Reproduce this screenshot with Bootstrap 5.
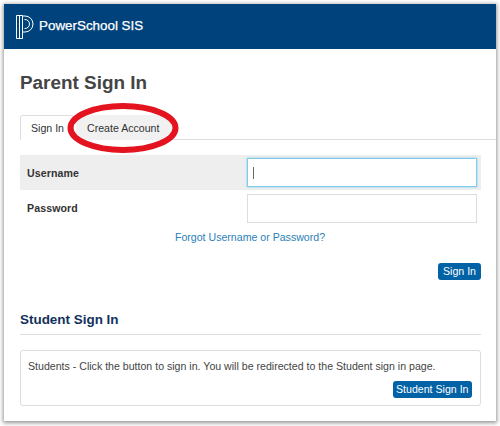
<!DOCTYPE html>
<html lang="en">
<head>
<meta charset="utf-8">
<title>Parent Sign In</title>
<link href="https://cdn.jsdelivr.net/npm/bootstrap@5.3.0/dist/css/bootstrap.min.css" rel="stylesheet">
<style>
html,body{height:426px;overflow:hidden}
body{background:#fff;font-family:"Liberation Sans",Arial,sans-serif;font-size:10.6px;color:#333;padding:4px 4px 5px 4px}
.ps-window{position:relative;height:417px;background:#fff;box-shadow:0 1px 4px 1px rgba(0,0,0,.42)}
.ps-head{height:45px;background:#00427c;padding:0 0 0 12px;gap:5px}
.ps-brand{color:#fff;font-size:13.4px;font-weight:400;-webkit-text-stroke:.25px #fff}
.ps-body{padding:0 15px 0 16px}
.ps-title{font-size:18.9px;font-weight:700;color:#444;margin:22px 0 0;line-height:24px}
.ps-tabs{margin:20px -15px 0 0;height:25px;border-bottom:1px solid #ddd;padding-left:0;gap:2px;flex-wrap:nowrap}
.ps-tabs .nav-link{font-size:10.6px;line-height:14px;color:#333;padding:5px 9px 5px 10px;border:1px solid transparent;border-radius:3px 3px 0 0;height:25px;margin:0}
.ps-tabs .nav-link.active{background:#fff;border-color:#ddd #ddd #fff;color:#333}
.ps-tabs .ps-off{background:#f1f1f1;padding-left:10px;padding-right:12px}
.ps-row{display:flex;align-items:center;height:35px;padding-left:7px}
.ps-row-on{background:#eee;margin-top:15px}
.ps-row-pw{height:33px;margin-top:1px;padding-top:1px}
.ps-row label{width:220px;font-weight:700;font-size:10.6px;letter-spacing:.1px;color:#333;margin:0;padding-top:2px}
.ps-in{width:230px;height:29px;border:1px solid #ddd;border-radius:0;padding:0 5px;font-size:12px;color:#555;background:#fff}
.ps-in-on{border:1px solid #7fcbea;box-shadow:0 0 2px #7fcbea;outline:0}
.ps-caret{width:1px;height:12px;background:#666}
.ps-forgot{display:block;text-align:center;margin-top:6px;line-height:14px;color:#2a7fb8;text-decoration:none;font-size:10.6px;padding-right:1px}
.ps-btn{background:#0162a6;color:#fff;font-size:10.6px;line-height:15px;padding:1px 3.5px;border:0;border-radius:3px}
.ps-btn:hover{background:#0162a6;color:#fff}
.ps-btn-sign{padding:1px 5px}
.ps-actions{margin-top:19px;height:17px}
.ps-sub{font-size:13.45px;font-weight:700;color:#12305c;margin:32px 0 0;line-height:16px}
.ps-rule{margin:6px 0 15px;border:0;border-top:1px solid #ddd;opacity:1}
.ps-box{height:56px;border:1px solid #ddd;border-radius:3px;padding:8px 8px 0 7px;color:#444;font-size:10.6px;line-height:14px}
.ps-box .ps-actions{margin-top:8px;height:17px}
.ps-ring{position:absolute;left:60px;top:95px;width:118px;height:58px;pointer-events:none}
</style>
</head>
<body>
<div class="ps-window">
  <header class="ps-head d-flex align-items-center">
    <svg width="18" height="24" viewBox="0 0 18 24" fill="none" stroke="#fff" stroke-width="1" aria-hidden="true">
      <path d="M.5.5h6v23h-6z"/>
      <path d="M3.5.5v23"/>
      <path d="M6.5 1h2.5a8 8 0 0 1 0 16H6.5"/>
      <path d="M8.5 4.5h.5a4.5 4.5 0 0 1 0 9h-.5"/>
    </svg>
    <span class="ps-brand">PowerSchool SIS</span>
  </header>
  <main class="ps-body">
    <h1 class="ps-title">Parent Sign In</h1>
    <ul class="nav nav-tabs ps-tabs">
      <li class="nav-item"><a class="nav-link active" href="#">Sign In</a></li>
      <li class="nav-item"><a class="nav-link ps-off" href="#">Create Account</a></li>
    </ul>
    <div class="ps-row ps-row-on">
      <label for="u">Username</label>
      <div class="ps-in ps-in-on d-flex align-items-center" id="u"><span class="ps-caret"></span></div>
    </div>
    <div class="ps-row ps-row-pw">
      <label for="p">Password</label>
      <input class="ps-in" id="p" type="password">
    </div>
    <a class="ps-forgot" href="#">Forgot Username or Password?</a>
    <div class="ps-actions d-flex justify-content-end"><button class="btn ps-btn ps-btn-sign" type="button">Sign In</button></div>
    <h2 class="ps-sub">Student Sign In</h2>
    <hr class="ps-rule">
    <div class="ps-box">
      <div>Students - Click the button to sign in. You will be redirected to the Student sign in page.</div>
      <div class="ps-actions d-flex justify-content-end"><button class="btn ps-btn" type="button">Student Sign In</button></div>
    </div>
  </main>
  <svg class="ps-ring" viewBox="0 0 118 58" fill="none" aria-hidden="true">
    <ellipse cx="59" cy="29" rx="52.5" ry="22" stroke="#e3141f" stroke-width="6"/>
  </svg>
</div>
<script src="https://cdn.jsdelivr.net/npm/bootstrap@5.3.0/dist/js/bootstrap.bundle.min.js"></script>
</body>
</html>
